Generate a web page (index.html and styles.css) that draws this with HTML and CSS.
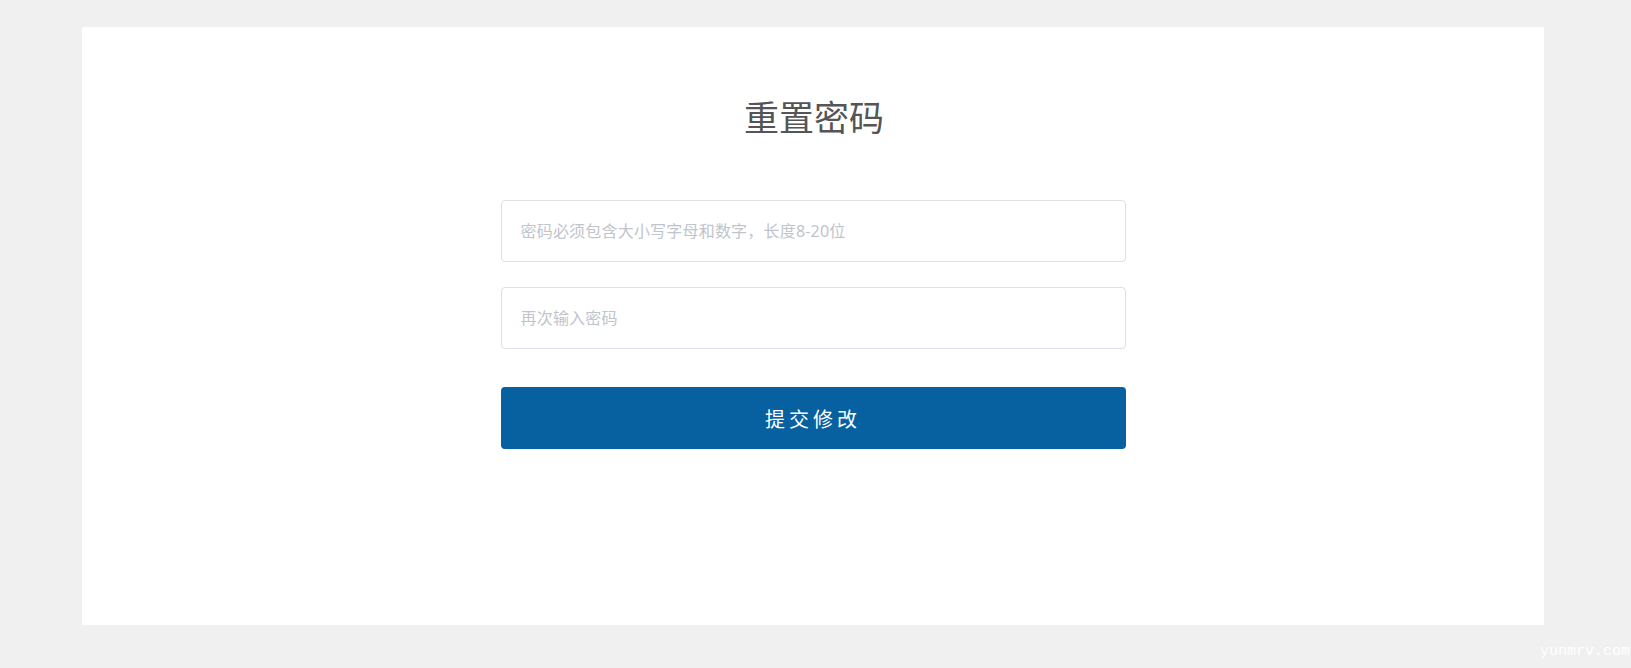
FILE: index.html
```html
<!DOCTYPE html>
<html lang="zh-CN">
<head>
<meta charset="utf-8">
<title>重置密码</title>
<link rel="stylesheet" href="styles.css">
</head>
<body>
<div class="page">
  <div class="card">
    <h1 class="title">重置密码</h1>
    <form class="form">
      <input class="field" type="password" placeholder="密码必须包含大小写字母和数字，长度8-20位">
      <input class="field" type="password" placeholder="再次输入密码">
      <button class="submit" type="button">提交修改</button>
    </form>
  </div>
</div>
<div class="watermark">yunmrv.com</div>
</body>
</html>
```
FILE: styles.css
```css
html, body {
  margin: 0;
  padding: 0;
  background: #f0f0f0;
  font-family: "Noto Sans", "Noto Sans CJK SC", "Liberation Sans", sans-serif;
}
.page {
  padding: 27px 87px 0 82px;
  height: 668px;
  box-sizing: border-box;
}
.card {
  background: #ffffff;
  width: 1462px;
  height: 598px;
  box-sizing: border-box;
  padding-top: 67px;
  display: flex;
  flex-direction: column;
  align-items: center;
}
.title {
  margin: 0;
  font-size: 35px;
  line-height: 48px;
  font-weight: 400;
  color: #555555;
  padding-left: 2px;
}
.form {
  margin-top: 58px;
  width: 625px;
  display: flex;
  flex-direction: column;
}
.field {
  height: 62px;
  box-sizing: border-box;
  border: 1px solid #dcdfe6;
  border-radius: 4px;
  padding: 0 19px;
  font-size: 16px;
  letter-spacing: 0.2px;
  font-family: inherit;
  color: #606266;
  outline: none;
  margin-bottom: 25px;
}
.field::placeholder {
  color: #c0c4cc;
}
.field + .field {
  margin-bottom: 38px;
}
.submit {
  height: 62px;
  border: none;
  border-radius: 4px;
  background: #0760a0;
  color: #ffffff;
  font-family: inherit;
  font-size: 20px;
  letter-spacing: 4px;
  padding: 0;
  cursor: pointer;
}
.watermark {
  position: absolute;
  right: 1px;
  top: 643px;
  font-family: "Liberation Mono", monospace;
  font-size: 15px;
  line-height: 18px;
  color: #ffffff;
}
```
